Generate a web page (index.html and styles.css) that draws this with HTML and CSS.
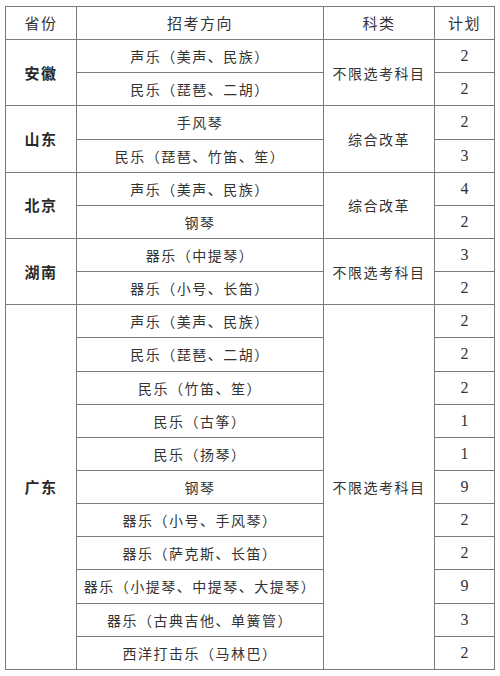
FILE: index.html
```html
<!DOCTYPE html>
<html lang="zh">
<head>
<meta charset="utf-8">
<link rel="stylesheet" href="styles.css">
</head>
<body>
<table class="plan">
  <colgroup>
    <col class="c-prov"><col class="c-dir"><col class="c-cat"><col class="c-num">
  </colgroup>
  <thead>
    <tr><th>省份</th><th>招考方向</th><th>科类</th><th>计划</th></tr>
  </thead>
  <tbody>
    <tr><td class="prov" rowspan="2">安徽</td><td>声乐（美声、民族）</td><td class="cat" rowspan="2">不限选考科目</td><td class="num">2</td></tr>
    <tr><td>民乐（琵琶、二胡）</td><td class="num">2</td></tr>
    <tr><td class="prov" rowspan="2">山东</td><td>手风琴</td><td class="cat" rowspan="2">综合改革</td><td class="num">2</td></tr>
    <tr><td>民乐（琵琶、竹笛、笙）</td><td class="num">3</td></tr>
    <tr><td class="prov" rowspan="2">北京</td><td>声乐（美声、民族）</td><td class="cat" rowspan="2">综合改革</td><td class="num">4</td></tr>
    <tr><td>钢琴</td><td class="num">2</td></tr>
    <tr><td class="prov" rowspan="2">湖南</td><td>器乐（中提琴）</td><td class="cat" rowspan="2">不限选考科目</td><td class="num">3</td></tr>
    <tr><td>器乐（小号、长笛）</td><td class="num">2</td></tr>
    <tr><td class="prov" rowspan="11">广东</td><td>声乐（美声、民族）</td><td class="cat" rowspan="11">不限选考科目</td><td class="num">2</td></tr>
    <tr><td>民乐（琵琶、二胡）</td><td class="num">2</td></tr>
    <tr><td>民乐（竹笛、笙）</td><td class="num">2</td></tr>
    <tr><td>民乐（古筝）</td><td class="num">1</td></tr>
    <tr><td>民乐（扬琴）</td><td class="num">1</td></tr>
    <tr><td>钢琴</td><td class="num">9</td></tr>
    <tr><td>器乐（小号、手风琴）</td><td class="num">2</td></tr>
    <tr><td>器乐（萨克斯、长笛）</td><td class="num">2</td></tr>
    <tr><td>器乐（小提琴、中提琴、大提琴）</td><td class="num">9</td></tr>
    <tr><td>器乐（古典吉他、单簧管）</td><td class="num">3</td></tr>
    <tr><td>西洋打击乐（马林巴）</td><td class="num">2</td></tr>
  </tbody>
</table>
</body>
</html>
```

FILE: styles.css
```css
html, body {
  margin: 0;
  padding: 0;
  background: #ffffff;
}
body {
  padding: 6px 0 0 5px;
  font-family: "Noto Sans CJK SC", "Liberation Serif", sans-serif;
  color: #333333;
}
.plan {
  border-collapse: collapse;
  table-layout: fixed;
  width: 489px;
  border: 1.5px solid #7a7a7a;
}
.c-prov { width: 71px; }
.c-dir { width: 247px; }
.c-cat { width: 111px; }
.c-num { width: 60px; }
.plan th,
.plan td {
  border: 1px solid #7a7a7a;
  height: 32.15px;
  padding: 0;
  text-align: center;
  vertical-align: middle;
  font-size: 14px;
  font-weight: normal;
  letter-spacing: 1.5px;
  line-height: 16px;
}
.plan th {
  font-size: 15px;
}
.plan td.prov {
  font-weight: bold;
  font-size: 15px;
  color: #2a2a2a;
}
.plan td.num {
  font-family: "Liberation Serif", serif;
  font-size: 16px;
  letter-spacing: 0;
}
```
